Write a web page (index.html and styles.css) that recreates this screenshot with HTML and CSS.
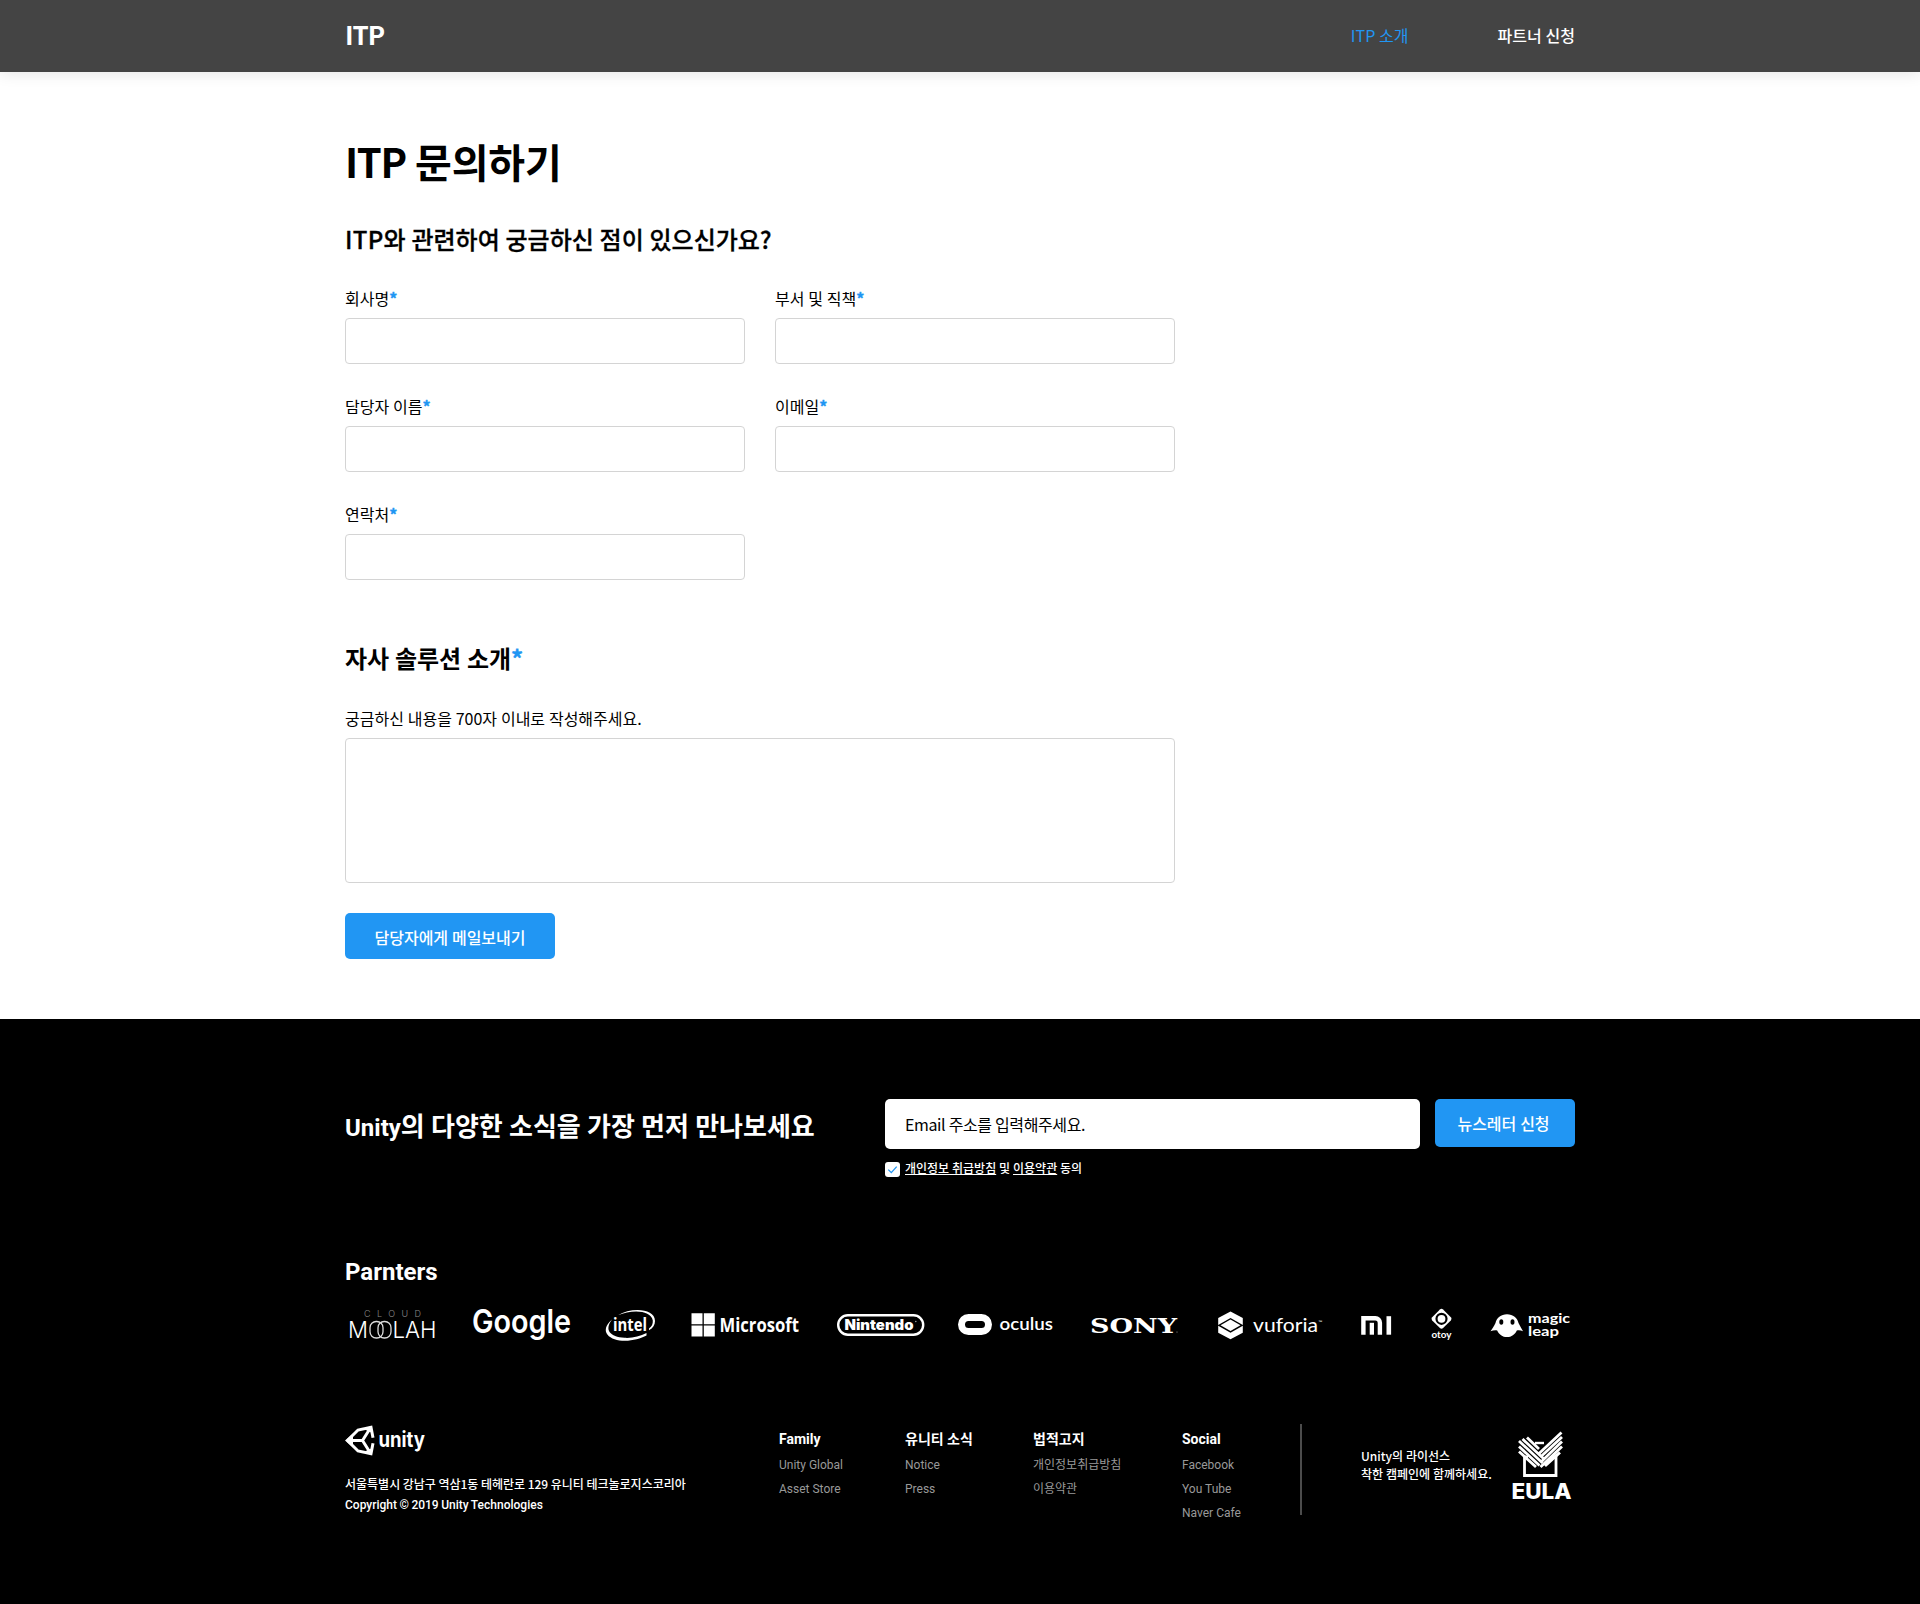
FILE: index.html
```html
<!DOCTYPE html>
<html lang="ko">
<head>
<meta charset="utf-8">
<title>ITP 문의하기</title>
<link rel="stylesheet" href="styles.css">
</head>
<body>
<header class="header">
  <div class="container header-inner">
    <a class="brand">ITP</a>
    <nav class="nav">
      <a class="nav-link active">ITP 소개</a>
      <a class="nav-link">파트너 신청</a>
    </nav>
  </div>
</header>

<main class="container main">
  <h1><span class="tight">ITP</span> 문의하기</h1>
  <form class="form">
    <h2><span class="wide">ITP</span>와 관련하여 궁금하신 점이 있으신가요?</h2>
    <div class="fields">
      <label class="field"><span>회사명<b>*</b></span><input type="text"></label>
      <label class="field"><span>부서 및 직책<b>*</b></span><input type="text"></label>
      <label class="field"><span>담당자 이름<b>*</b></span><input type="text"></label>
      <label class="field"><span>이메일<b>*</b></span><input type="text"></label>
      <label class="field"><span>연락처<b>*</b></span><input type="text"></label>
    </div>
    <h2 class="second">자사 솔루션 소개<b>*</b></h2>
    <label class="field"><span>궁금하신 내용을 700자 이내로 작성해주세요.</span><textarea></textarea></label>
    <button type="button" class="submit">담당자에게 메일보내기</button>
  </form>
</main>

<footer class="footer">
  <div class="container">
    <section class="news">
      <h3 class="news-title"><span class="latin">Unity</span>의 다양한 소식을 가장 먼저 만나보세요</h3>
      <div class="news-form">
        <div class="email">Email 주소를 입력해주세요.</div>
        <div class="agree">
          <svg class="check" viewBox="0 0 15 15"><rect width="15" height="15" rx="3" fill="#fff"/><path d="M3.3 7.6l3 3 5.4-6" fill="none" stroke="#2196f3" stroke-width="1.3"/></svg>
          <span><u>개인정보 취급방침</u> 및 <u>이용약관</u> 동의</span>
        </div>
      </div>
      <button type="button" class="subscribe">뉴스레터 신청</button>
    </section>

    <section class="partners">
      <h3>Parnters</h3>
      <div class="logos">
        <svg width="94" height="40" viewBox="0 0 94 40">
          <g class="thin">
            <text class="cloud" x="15" y="11.5" font-size="9" textLength="57">CLOUD</text>
            <text x="-1" y="33" font-size="23" textLength="20" lengthAdjust="spacingAndGlyphs">M</text>
            <text x="43.5" y="33" font-size="23" textLength="44" lengthAdjust="spacingAndGlyphs">LAH</text>
          </g>
          <g fill="none" stroke="#ddd" stroke-width="1.3"><rect x="21" y="16.5" width="13" height="16.5" rx="6.2"/><rect x="29" y="16.5" width="13" height="16.5" rx="6.2"/></g>
        </svg>
        <svg width="103" height="40" viewBox="0 0 103 40">
          <text class="google" x="-1" y="28" font-size="32" textLength="99" lengthAdjust="spacingAndGlyphs">Google</text>
        </svg>
        <svg width="55" height="40" viewBox="0 0 55 40">
          <path d="M12 10.2C25 2.2 49 3 49 16C49 20 47 23 43 25.2L43 23.5C46 21.5 47 18.5 46.800 15.5C45 4.5 25 4.500 12 10.200Z" fill="#fff"/>
          <path d="M6 14.500C-8 27 4 35.800 19 35.800C27 35.800 35 33.300 40.500 30.500L40.500 28C34 31.500 26 33.300 18.500 32.800C4 31.800-2 25 6 14.500Z" fill="#fff"/>
          <text class="intel" x="7" y="25.500" font-size="18" textLength="34" lengthAdjust="spacingAndGlyphs">intel</text>
        </svg>
        <svg width="116" height="40" viewBox="0 0 116 40">
          <path d="M.5 8.300h11v11H.5zM12.800 8.300h11v11h-11zM.5 20.600h11v11H.5zM12.800 20.600h11v11h-11z" fill="#fff"/>
          <text class="ms" x="28.500" y="27" font-size="19" textLength="79.500" lengthAdjust="spacingAndGlyphs">Microsoft</text>
        </svg>
        <svg width="91" height="40" viewBox="0 0 91 40">
          <rect x="1.200" y="10.300" width="85" height="19.500" rx="9.700" fill="none" stroke="#fff" stroke-width="2.400"/>
          <text class="nintendo" x="7.500" y="25" font-size="14" textLength="69" lengthAdjust="spacingAndGlyphs">Nintendo</text>
          <circle cx="78.800" cy="16.500" r=".8" fill="#999"/>
        </svg>
        <svg width="102" height="40" viewBox="0 0 102 40">
          <rect x="3.500" y="12.500" width="27" height="14" rx="7" fill="none" stroke="#fff" stroke-width="7"/>
          <text class="oculus" x="41.500" y="24.500" font-size="18" textLength="53.500" lengthAdjust="spacingAndGlyphs">oculus</text>
        </svg>
        <svg width="98" height="40" viewBox="0 0 98 40">
          <text class="sony" x="0" y="27.500" font-size="21" textLength="87" lengthAdjust="spacingAndGlyphs">SONY</text>
          <circle cx="87" cy="27" r=".6" fill="#999"/>
        </svg>
        <svg width="113" height="40" viewBox="0 0 113 40">
          <path d="M12.500 6.500l12.300 6.500v7l-12.300-7-12.300 7v-7zM12.500 34.200l12.300-6.500v-7l-12.300 7-12.300-7v7zM12.500 14.500l10 5.700-10 5.700-10-5.700z" fill="#fff"/>
          <text class="vuforia" x="35" y="27" font-size="20" textLength="65" lengthAdjust="spacingAndGlyphs">vuforia</text>
          <text class="vuforia" x="100.500" y="19" font-size="5">™</text>
        </svg>
        <svg width="40" height="40" viewBox="0 0 40 40">
          <path d="M2.400 29.700V13.300h12a4.500 4.500 0 0 1 4.500 4.500v11.900" fill="none" stroke="#fff" stroke-width="4.400"/>
          <rect x="8.700" y="17.800" width="4.300" height="11.900" fill="#fff"/><rect x="25.500" y="11.200" width="4.600" height="18.500" fill="#fff"/>
        </svg>
        <svg width="29" height="40" viewBox="0 0 29 40">
          <path d="M8.900 4.500q1.600-1.500 3.200 0l7.700 7.700q1.500 1.600 0 3.200l-7.700 7.700q-1.600 1.500-3.200 0l-7.700-7.700q-1.500-1.600 0-3.200z" fill="#fff"/>
          <circle cx="10.500" cy="13.800" r="5" fill="none" stroke="#000" stroke-width="2.200"/>
          <text class="otoy" x=".5" y="32.500" font-size="10" textLength="20" lengthAdjust="spacingAndGlyphs">otoy</text>
        </svg>
        <svg width="80" height="40" viewBox="0 0 80 40">
          <path d="M17 9.200c6 0 10.500 3.800 11.500 8.800 1.500 3 3 5.500 4.500 8.200-2-1-4-1.200-6.200-.8-1.800 4-5.300 6.600-9.800 6.600s-8-2.600-9.800-6.600c-2.200-.4-4.500 0-6.700.8 2-2.700 3.500-5.200 5-8.200C6.500 13 11 9.200 17 9.200z" fill="#fff"/>
          <ellipse cx="11.300" cy="17" rx="2" ry="2.800" fill="#000"/><ellipse cx="22.500" cy="17" rx="2" ry="2.800" fill="#000"/>
          <text class="leap" x="38" y="18" font-size="14" textLength="42" lengthAdjust="spacingAndGlyphs">magic</text>
          <text class="leap" x="38" y="31" font-size="14" textLength="31" lengthAdjust="spacingAndGlyphs">leap</text>
        </svg>
      </div>
    </section>

    <section class="bottom">
      <div class="company">
        <svg class="unity" width="84" height="32" viewBox="0 0 84 32">
          <path d="M2.500 16.500L13 6l13-2.800 2 10.500M2.500 16.500L13 27l13 2.800 2-10.500M4 16.500h13.500L26 3M17.500 16.500L26 30" fill="none" stroke="#fff" stroke-width="3"/>
          <path d="M0 16.500l8-7v14zM26.500 2l1 7-8-3.500zM26.500 31l1-7-8 3.500z" fill="#fff"/>
          <text x="33.500" y="22.500" font-size="21" textLength="46.500" lengthAdjust="spacingAndGlyphs">unity</text>
        </svg>
        <p class="address">서울특별시 강남구 역삼1동 테헤란로 129 유니티 테크놀로지스코리아</p>
        <p class="copy">Copyright © 2019 Unity Technologies</p>
      </div>
      <div class="links">
        <div class="col"><h4>Family</h4><a>Unity Global</a><a>Asset Store</a></div>
        <div class="col ko"><h4>유니티 소식</h4><a class="en">Notice</a><a class="en">Press</a></div>
        <div class="col ko"><h4>법적고지</h4><a>개인정보취급방침</a><a>이용약관</a></div>
        <div class="col"><h4>Social</h4><a>Facebook</a><a>You Tube</a><a>Naver Cafe</a></div>
      </div>
      <div class="license">
        <p>Unity의 라이선스<br>착한 캠페인에 함께하세요.</p>
        <svg width="64" height="72" viewBox="0 0 64 72">
          <path d="M17 25h-3.500v18.500h31.500V25h-4" fill="none" stroke="#fff" stroke-width="2.800"/>
          <path d="M24 11h9" stroke="#fff" stroke-width="2.400"/>
          <g fill="none" stroke="#fff" stroke-width="2.800">
            <path d="M8 19.500l17 15.500M8 14.500l20.500 19M8 9l23.500 22M11.500 7l22 20.500M16 5.500l12 11.500"/>
            <path d="M50.500.500L27.500 22M51 5L29.500 25M51 9.500L30 30M51 14.500L29.500 35M49 20.500L34 34"/>
          </g>
          <text class="eula" x=".5" y="66.500" font-size="21" textLength="60" lengthAdjust="spacingAndGlyphs">EULA</text>
        </svg>
      </div>
    </section>
  </div>
</footer>
</body>
</html>
```
FILE: styles.css
```css
* { box-sizing: border-box; margin: 0; padding: 0; }
body { font-family: "Noto Sans CJK KR", "Noto Sans", sans-serif; font-size: 16px; color: #000; background: #fff; }
.container { width: 1230px; margin: 0 auto; }
h1, h2, h3, h4, p, a, label, button, .email, .agree { word-spacing: -.04em; }

.header { height: 72px; background: #444; box-shadow: 0 0 16px rgba(0, 0, 0, .12); }
.header-inner { height: 72px; display: flex; justify-content: space-between; align-items: flex-start; color: #fff; }
.brand { font-size: 26px; font-weight: 700; line-height: 68px; letter-spacing: -1px; }
.nav { display: flex; gap: 89px; }
.nav-link { line-height: 70px; font-weight: 500; }
.nav-link.active { color: #2196f3; font-weight: 400; }

.main { padding: 60px 0; }
h1 { font-size: 40px; font-weight: 700; line-height: 58px; margin-bottom: 30px; letter-spacing: -.2px; }
h1 .tight { letter-spacing: -1.4px; }
h2 { font-size: 24px; font-weight: 500; line-height: 36px; padding-top: 1px; margin-bottom: 29px; -webkit-text-stroke: .3px currentColor; }
h2 .wide { letter-spacing: .3px; }
h2.second { margin-top: 60px; font-weight: 700; padding-top: 0; margin-bottom: 30px; -webkit-text-stroke: 0; }
b { color: #2196f3; font-weight: 700; -webkit-text-stroke: .4px currentColor; }
.form { width: 830px; }
.fields { display: grid; grid-template-columns: 400px 400px; gap: 30px; }
.field { display: flex; flex-direction: column; gap: 8px; }
.field span { line-height: 24px; }
.field input, .field textarea { display: block; width: 100%; height: 46px; border: 1px solid #d4d4d4; border-radius: 4px; background: #fff; outline: 0; }
.field textarea { height: 145px; resize: none; }
button { border: 0; border-radius: 5px; background: #2196f3; color: #fff; font-family: inherit; font-size: 16px; font-weight: 500; }
.submit { display: block; width: 210px; height: 46px; margin-top: 30px; padding-top: 2px; }

.footer { height: 585px; background: #000; color: #fff; padding-top: 80px; }
.news { display: flex; height: 78px; align-items: flex-start; }
.news-title { width: 540px; font-size: 26px; line-height: 51px; font-weight: 700; white-space: nowrap; }
.news-title .latin { font-family: Roboto, sans-serif; font-size: 24px; }
.news-form { width: 535px; margin-right: 15px; }
.email { height: 50px; line-height: 50px; padding-left: 20px; border-radius: 5px; background: #fff; color: #000; letter-spacing: -.4px; }
.agree { display: flex; align-items: center; gap: 5px; margin-top: 9px; font-size: 12px; font-weight: 500; line-height: 18px; }
.check { width: 15px; height: 15px; margin-top: 4px; }
.subscribe { width: 140px; height: 48px; padding: 0 3px 1px 0; }

.partners { margin-top: 81px; }
.partners h3 { font: 700 24px/28px Roboto, sans-serif; margin-bottom: 19px; }
.logos { display: flex; gap: 30px; padding-left: 4px; height: 40px; }
.logos svg { flex: none; overflow: visible; }
svg text { fill: #fff; }
.thin { font-family: Inter, sans-serif; font-weight: 300; }
.thin .cloud { fill: #888; }
.google { font-family: Inter, sans-serif; font-weight: 600; }
.intel { font-family: "Open Sans", sans-serif; font-weight: 700; }
.ms { font-family: "Open Sans", sans-serif; font-weight: 700; }
.nintendo { font-family: Inter, sans-serif; font-weight: 900; }
.oculus { font-family: Lato, sans-serif; font-weight: 600; }
.sony { font-family: "DejaVu Serif", serif; font-weight: 700; }
.vuforia { font-family: Lato, sans-serif; font-weight: 400; }
.otoy, .leap { font-family: Lato, sans-serif; font-weight: 700; }

.bottom { display: flex; margin-top: 79px; height: 91px; }
.company { width: 434px; font-size: 12px; line-height: 20px; font-weight: 500; }
.unity { display: block; margin-bottom: 18px; overflow: visible; }
.unity text { font-family: Inter, sans-serif; font-weight: 700; }
.address { word-spacing: -.8px; }
.copy { font-family: Roboto, sans-serif; padding-top: 1px; }
.links { display: grid; grid-template-columns: 126px 128px 149px 118px; width: 521px; }
.col { display: flex; flex-direction: column; font-family: Roboto, sans-serif; word-spacing: 0; }
.col a { word-spacing: 0; }
.col.ko { font-family: "Noto Sans CJK KR", sans-serif; }
.col h4 { font-size: 14px; font-weight: 700; line-height: 30px; margin-bottom: -1px; }
.col.ko h4 { line-height: 28px; margin-bottom: 0; }
.col a { font-size: 12px; line-height: 24px; color: #999; }
.col .en { font-family: Roboto, sans-serif; margin-top: 1px; margin-bottom: -1px; }
.license { flex: 1; display: flex; justify-content: space-between; border-left: 2px solid #4c4c4c; padding-left: 59px; }
.license p { font-size: 12px; line-height: 18px; font-weight: 500; margin-top: 23px; white-space: nowrap; }
.license svg { margin-top: 8px; overflow: visible; }
.eula { font-family: Inter, sans-serif; font-weight: 800; }
```
